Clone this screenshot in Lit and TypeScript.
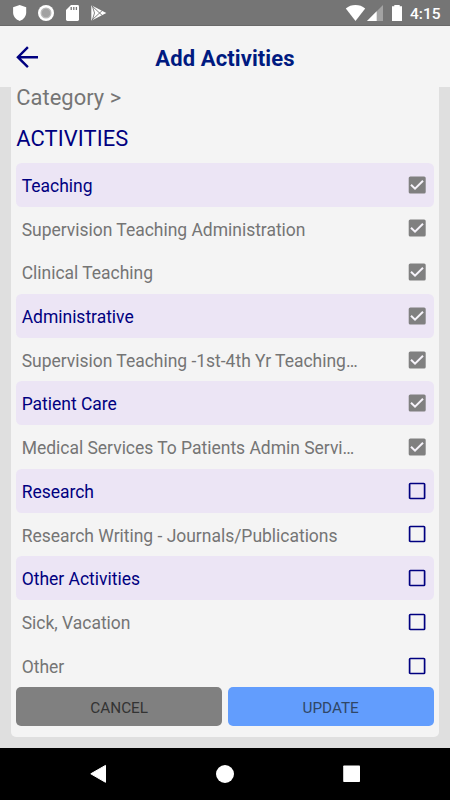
import { LitElement, html, css, svg } from "lit";
import { customElement, property } from "lit/decorators.js";
import { classMap } from "lit/directives/class-map.js";

interface Activity {
  label: string;
  group?: boolean;
  checked?: boolean;
}

const ACTIVITIES: Activity[] = [
  { label: "Teaching", group: true, checked: true },
  { label: "Supervision Teaching Administration", checked: true },
  { label: "Clinical Teaching", checked: true },
  { label: "Administrative", group: true, checked: true },
  { label: "Supervision Teaching -1st-4th Yr Teaching…", checked: true },
  { label: "Patient Care", group: true, checked: true },
  { label: "Medical Services To Patients Admin Servi…", checked: true },
  { label: "Research", group: true },
  { label: "Research Writing - Journals/Publications" },
  { label: "Other Activities", group: true },
  { label: "Sick, Vacation" },
  { label: "Other" },
];

@customElement("status-bar")
export class StatusBar extends LitElement {
  static styles = css`
    :host { display: block; flex: none; height: 26px; background: #757575; box-sizing: border-box; border-bottom: 1px solid #696969; }
    .bar { display: flex; justify-content: space-between; height: 25px; }
    svg { display: block; height: 26px; }
    .right { display: flex; }
    .time { width: 42px; padding-left: 2px; box-sizing: border-box; font: 500 15.5px/28px Roboto, sans-serif; color: #fff; white-space: nowrap; }
  `;
  render() {
    return html`<div class="bar">
      <svg width="120" viewBox="0 0 120 26">
        <path fill="#fff" d="M19.7 5 26.2 7.2V12.6C26.2 16.6 23.3 19.8 19.7 21 16 19.8 13.1 16.6 13.1 12.6V7.2Z" />
        <circle cx="46" cy="13" r="8" fill="#fff" />
        <circle cx="46" cy="13" r="4.9" fill="#a2a2a2" stroke="#bcbcbc" stroke-width="1.2" />
        <path fill="#fff" d="M71 5H77.6Q79 5 79 6.4V19.6Q79 21 77.6 21H67.4Q66 21 66 19.6V10Z" />
        <path stroke="#757575" stroke-width="1.3" d="M71.2 7v3M73.8 7v3M76.4 7v3" />
        <path fill="#fff" d="M91.3 5.2 106.3 13 91.3 20.8Z" />
        <path fill="none" stroke="#757575" stroke-width=".9" d="M91.5 5.5 102.8 16M91.5 20.5 102.8 10M92.2 5.5 94.5 13 92.2 20.5" />
      </svg>
      <div class="right">
        <svg width="67" viewBox="342 0 67 26">
          <path fill="#fff" d="M356.5 21 346.8 8.4Q351 5 356.5 5T366.2 8.4Z" />
          <path fill="#a3a3a3" d="M384 5V21H368Z" />
          <path fill="#fff" d="M377.7 11.3V21H368Z" />
          <path fill="#fff" d="M393 6.3H395.3V5H400.7V6.3H403V21H393Z" />
        </svg>
        <div class="time">4:15</div>
      </div>
    </div>`;
  }
}

@customElement("check-box")
export class CheckBox extends LitElement {
  @property({ type: Boolean }) checked = false;
  static styles = css`
    :host { display: block; width: 18px; height: 18px; }
    svg { display: block; }
    .tick { fill: none; stroke: #f6f3fa; stroke-width: 2; }
    .fill { fill: #808080; }
    .box { fill: none; stroke: #000080; stroke-width: 1.7; }
  `;
  render() {
    return html`<svg width="18" height="18" viewBox="0 0 18 18">
      ${this.checked
        ? svg`<rect class="fill" x=".7" y=".5" width="17" height="17" rx="1.6" /><path class="tick" d="M3 8.8 7 12.7 15 4.7" />`
        : svg`<rect class="box" x="1.6" y="1.5" width="15" height="15" rx=".8" />`}
    </svg>`;
  }
}

@customElement("app-root")
export class AppRoot extends LitElement {
  static styles = css`
    :host { display: flex; flex-direction: column; width: 450px; height: 800px; overflow: hidden; background: #dfdfdf; font-family: Roboto, sans-serif; }
    .header { flex: none; height: 61.4px; display: grid; grid-template-columns: 56px 1fr 56px; align-items: center; background: #f4f4f4; }
    .back { margin-left: 15px; display: block; }
    .title { text-align: center; font-size: 22px; font-weight: 700; line-height: 26px; letter-spacing: 0.1px; color: #001a80; padding-top: 4px; }
    .content { flex: 1; min-height: 0; padding: 0 11px 11px; display: flex; }
    .card { flex: 1; min-width: 0; background: #f4f4f4; border-radius: 0 0 5px 5px; padding: 0 5.4px 0 5.2px; }
    .crumb { height: 30px; line-height: 21px; font-size: 21.9px; letter-spacing: 0.05px; color: #757575; }
    .heading { height: 45.4px; line-height: 43px; font-size: 21.9px; letter-spacing: 0.1px; color: #000080; }
    .row { display: flex; align-items: center; justify-content: space-between; height: 43.73px; padding: 0 7.7px 0 5.5px; border-radius: 5.5px; box-sizing: border-box; font-size: 17.5px; letter-spacing: -0.02px; color: #757575; white-space: nowrap; }
    .row.group { background: #ece5f5; color: #000080; }
    .label { padding-top: 2.5px; }
    .actions { display: grid; grid-template-columns: 1fr 1fr; gap: 5.5px; }
    .button { height: 38.3px; border-radius: 5px; display: flex; align-items: center; justify-content: center; font-size: 15.3px; padding-top: 2px; box-sizing: border-box; }
    .cancel { background: #808080; color: #333; }
    .update { background: #629dfd; color: #304766; }
    .nav { flex: none; height: 52.3px; background: #000; }
    .nav svg { display: block; }
  `;
  render() {
    return html`
      <status-bar></status-bar>
      <div class="header">
        <svg class="back" width="25" height="24" viewBox="0 0 25 24">
          <path fill="none" stroke="#000080" stroke-width="2.4" d="M23 12.2H3.2M12.9 2.1 2.9 12.2 12.9 22.1" />
        </svg>
        <div class="title">Add Activities</div>
      </div>
      <div class="content">
        <div class="card">
          <div class="crumb">Category &gt;</div>
          <div class="heading">ACTIVITIES</div>
          ${ACTIVITIES.map(
            (a) => html`<div class=${classMap({ row: true, group: !!a.group })}>
              <span class="label">${a.label}</span>
              <check-box ?checked=${!!a.checked}></check-box>
            </div>`
          )}
          <div class="actions">
            <div class="button cancel">CANCEL</div>
            <div class="button update">UPDATE</div>
          </div>
        </div>
      </div>
      <div class="nav">
        <svg width="450" height="52" viewBox="0 748 450 52">
          <path fill="#fff" stroke="#fff" stroke-linejoin="round" d="M90.8 773.8 105.5 765.4V782.3Z" />
          <circle cx="225" cy="774" r="9" fill="#fff" />
          <rect x="343.2" y="765.5" width="16.8" height="16.5" rx=".8" fill="#fff" />
        </svg>
      </div>
    `;
  }
}
